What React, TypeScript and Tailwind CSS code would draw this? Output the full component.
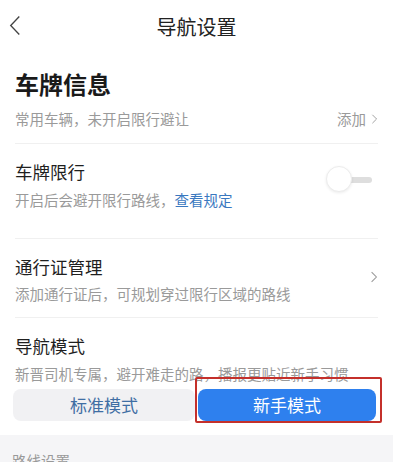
import React from "react";

const Chevron = ({ className }: { className?: string }) => (
  <svg viewBox="0 0 10 16" className={className} fill="none" stroke="currentColor" strokeWidth="1.3">
    <path d="M2 2l6 6-6 6" />
  </svg>
);

export default function App() {
  return (
    <div className="w-[393px] h-[462px] overflow-hidden bg-white" style={{ fontFamily: '"Noto Sans CJK SC", "Noto Sans", sans-serif' }}>
      <div className="relative h-[54px] flex items-center justify-center">
        <svg viewBox="0 0 12 22" className="absolute left-[9px] top-[15px] w-[12px] h-[21px] text-[#444]" fill="none" stroke="currentColor" strokeWidth="1.4">
          <path d="M10.5 1.5L1.5 11l9 9.5" />
        </svg>
        <div className="text-[20px] leading-[28px] text-[#222] mt-[0px]">导航设置</div>
      </div>

      <div className="px-[15px]">
        <div className="mt-[14px] text-[24px] leading-[32px] font-bold text-[#1a1a1a]">车牌信息</div>
        <div className="mt-[9px] flex items-center justify-between h-[20px]">
          <span className="text-[14.5px] text-[#9a9a9a]">常用车辆，未开启限行避让</span>
          <span className="flex items-center gap-[5px] text-[14.5px] text-[#9a9a9a]">
            添加
            <Chevron className="w-[7px] h-[12px] text-[#999]" />
          </span>
        </div>
        <div className="mt-[14px] h-px bg-[#f0f0f0]" />

        <div className="flex items-center justify-between">
          <div>
            <div className="mt-[16px] text-[17.5px] leading-[24px] text-[#1f1f1f]">车牌限行</div>
            <div className="mt-[6px] text-[14.5px] leading-[20px] text-[#9a9a9a]">
              开启后会避开限行路线，<span className="text-[#3a78bf]">查看规定</span>
            </div>
          </div>
          <div className="relative w-[46px] h-[28px] mr-[6px] mt-[6px]">
            <div className="absolute right-0 top-[11px] w-[26px] h-[6px] rounded-full bg-[#dedede]" />
            <div className="absolute left-0 top-0 w-[26px] h-[26px] rounded-full bg-white border border-[#ececec] shadow-[0_1px_3px_rgba(0,0,0,0.08)]" />
          </div>
        </div>
        <div className="mt-[28px] h-px bg-[#f0f0f0]" />

        <div className="flex items-center justify-between">
          <div>
            <div className="mt-[16px] text-[17.5px] leading-[24px] text-[#1f1f1f]">通行证管理</div>
            <div className="mt-[5px] text-[14.5px] leading-[20px] text-[#9a9a9a]">添加通行证后，可规划穿过限行区域的路线</div>
          </div>
          <Chevron className="w-[8px] h-[14px] text-[#999] mt-[10px]" />
        </div>
        <div className="mt-[13px] h-px bg-[#f0f0f0]" />

        <div className="mt-[16px] text-[17.5px] leading-[24px] text-[#1f1f1f]">导航模式</div>
        <div className="mt-[6px] text-[14.5px] leading-[20px] text-[#9a9a9a] whitespace-nowrap">新晋司机专属，避开难走的路，播报更贴近新手习惯</div>
      </div>

      <div className="relative mt-[5px] flex gap-[3px] pl-[13px] pr-[17px]">
        <div className="w-[182px] h-[32px] rounded-[8px] bg-[#f1f1f3] flex items-center justify-center text-[17px] text-[#3f6ea3]">标准模式</div>
        <div className="flex-1 h-[32px] rounded-[8px] bg-[#2e80ee] flex items-center justify-center text-[17px] text-white">新手模式</div>
        <div className="absolute left-[195px] top-[-12px] w-[187px] h-[46px] border-[2px] border-[#c4302b] rounded-[2px]" />
      </div>

      <div className="mt-[14px] bg-[#f5f5f7] h-[60px] px-[12px] pt-[16px]">
        <div className="text-[14.5px] leading-[20px] text-[#999]">路线设置</div>
      </div>
    </div>
  );
}
